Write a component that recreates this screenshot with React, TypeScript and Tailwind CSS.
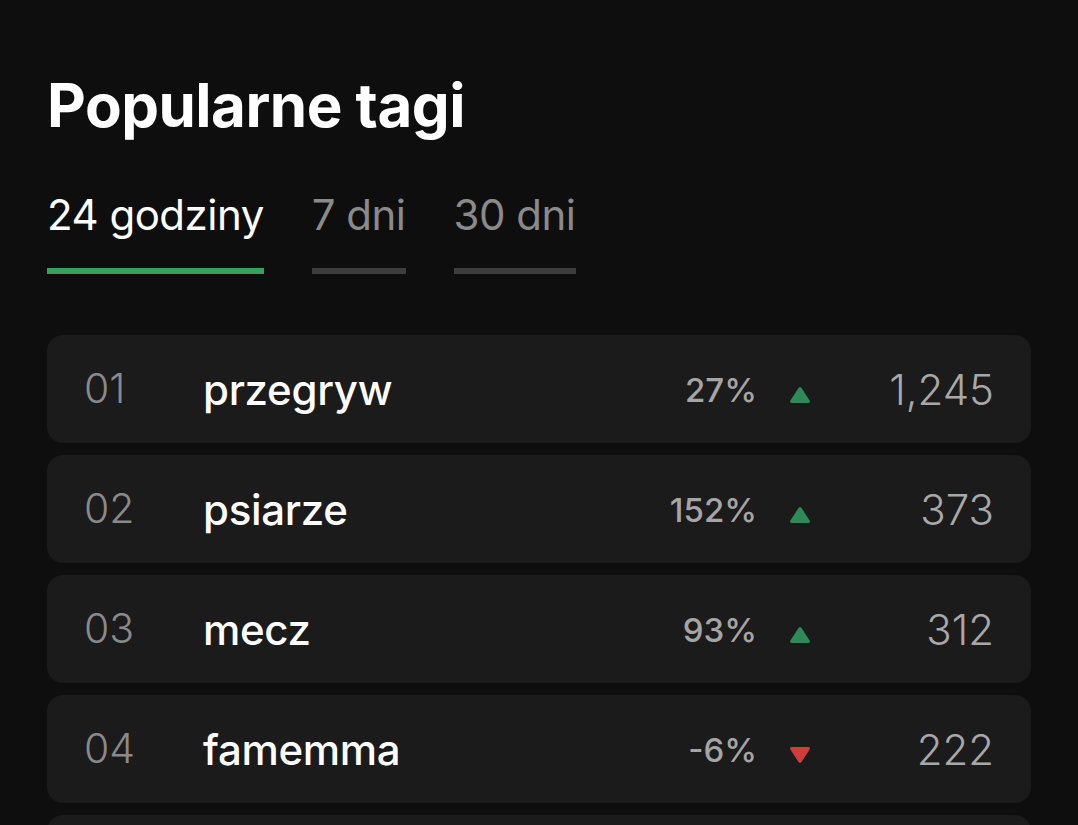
const tabs = [
  { label: "24 godziny", active: true },
  { label: "7 dni", active: false },
  { label: "30 dni", active: false },
];

const rows = [
  { n: "01", tag: "przegryw", pct: "27%", up: true, count: "1,245" },
  { n: "02", tag: "psiarze", pct: "152%", up: true, count: "373" },
  { n: "03", tag: "mecz", pct: "93%", up: true, count: "312" },
  { n: "04", tag: "famemma", pct: "-6%", up: false, count: "222" },
  { n: "05", tag: "polityka", pct: "12%", up: true, count: "198" },
];

const Arrow = ({ up }: { up: boolean }) => (
  <svg width="22" height="18" viewBox="0 0 22 18" className={up ? "" : "rotate-180"}>
    <path
      d="M9.3 2.2 Q11 0 12.7 2.2 L20.6 14.6 Q21.8 17 19 17 H3 Q0.2 17 1.4 14.6 Z"
      fill={up ? "#2e8b57" : "#d23c3c"}
    />
  </svg>
);

const App = () => {
  return (
    <div
      className="min-h-screen bg-[#0e0e0e] px-[47px] pt-[70px] overflow-hidden"
      style={{ fontFamily: "Inter, 'Noto Sans', sans-serif" }}
    >
      <h1 className="text-[60px] leading-[70px] font-bold text-white tracking-[-0.5px]">
        Popularne tagi
      </h1>

      <div className="mt-[50px] flex gap-12">
        {tabs.map((t) => (
          <div key={t.label} className="flex flex-col">
            <span
              className={`text-[42px] leading-[50px] tracking-[-0.5px] ${
                t.active ? "text-white" : "text-[#8a8a8a]"
              }`}
            >
              {t.label}
            </span>
            <div
              className={`mt-[28px] h-[6px] ${
                t.active ? "bg-[#36a15e]" : "bg-[#3d3d3d]"
              }`}
            />
          </div>
        ))}
      </div>

      <div className="mt-[61px] flex flex-col gap-3">
        {rows.map((r) => (
          <div
            key={r.n}
            className="h-[108px] rounded-2xl bg-[#1b1b1b] flex items-center pl-[37px] pr-[37px]"
          >
            <span className="w-[119px] text-[41px] font-light text-[#8a8a8a]">{r.n}</span>
            <span className="flex-1 text-[42px] font-medium text-white tracking-[-0.3px]">
              {r.tag}
            </span>
            <span className="pt-[3px] text-[33px] font-medium text-[#a5a5a5] text-right">
              {r.pct}
            </span>
            <span className="ml-[32px] mt-[12px] flex items-center">
              <Arrow up={r.up} />
            </span>
            <span className="w-[183px] text-right text-[42px] font-light text-[#a8a8a8]">
              {r.count}
            </span>
          </div>
        ))}
      </div>
    </div>
  );
};

export default App;
